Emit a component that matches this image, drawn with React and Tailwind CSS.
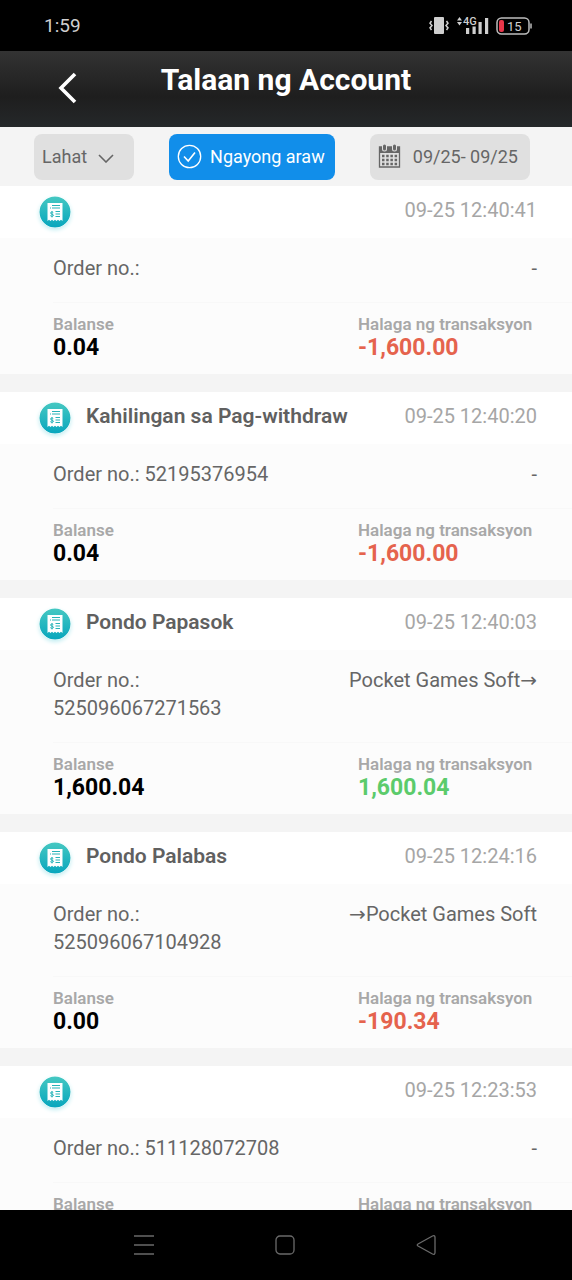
import React, { useState } from 'react';

const records = [
    { id: 1, title: '', time: '09-25 12:40:41', orderNo: '', remark: '-', balance: '0.04', amount: '-1,600.00' },
    { id: 2, title: 'Kahilingan sa Pag-withdraw', time: '09-25 12:40:20', orderNo: '52195376954', remark: '-', balance: '0.04', amount: '-1,600.00' },
    { id: 3, title: 'Pondo Papasok', time: '09-25 12:40:03', orderNo: '525096067271563', remark: 'Pocket Games Soft', flow: 'in', balance: '1,600.04', amount: '1,600.04' },
    { id: 4, title: 'Pondo Palabas', time: '09-25 12:24:16', orderNo: '525096067104928', remark: 'Pocket Games Soft', flow: 'out', balance: '0.00', amount: '-190.34' },
    { id: 5, title: '', time: '09-25 12:23:53', orderNo: '511128072708', remark: '-', balance: '190.34', amount: '-200.00' },
];

const StatusBar = () => (
    <div className="flex h-[51px] shrink-0 items-center justify-between bg-black pl-11 pr-10 text-[#cfcfcf]">
        <span className="text-[19px] leading-6">1:59</span>
        <svg width="104" height="22" viewBox="0 0 104 22" aria-hidden="true">
            <rect x="6" y="2" width="10" height="17" rx="1" fill="#cfcfcf" />
            <path d="M3.5 6l-1.500 2.300 2 2.300-2 2.300L3.500 15M18.500 6l1.500 2.300-2 2.300 2 2.300-1.500 2.100" fill="none" stroke="#cfcfcf" strokeWidth="1.500" />
            <path d="M29 5.500l2.500-3.500 2.500 3.500zM29 7l2.500 3.500 2.500-3.500z" fill="#cfcfcf" />
            <text x="35" y="10" fontSize="11" fontWeight="500" fill="#cfcfcf">4G</text>
            <path d="M38 13h3.200v6H38zM44.500 11.500h3.200V19h-3.200zM50.500 7h3.200v12h-3.200zM57 3h3.200v16H57z" fill="#cfcfcf" />
            <rect x="69" y="3" width="32" height="16" rx="4.500" fill="none" stroke="#bdbdbd" strokeWidth="1.500" />
            <rect x="71" y="5" width="5" height="12" rx="2" fill="#e8364a" />
            <path d="M103 8.500v5" stroke="#bdbdbd" strokeWidth="1.500" />
            <text x="79" y="16" fontSize="13" fill="#cfcfcf">15</text>
        </svg>
    </div>
);

const Header = () => (
    <header className="grid h-[76px] shrink-0 grid-cols-[1fr_auto_1fr] bg-linear-to-b from-[#333333] via-[#1e1e1e] via-60% to-[#25282a] text-white">
        <button type="button" aria-label="Bumalik" className="justify-self-start pb-0.5 pl-14">
            <svg width="22" height="32" viewBox="0 0 22 32" fill="none" stroke="currentColor" strokeWidth="3.600" aria-hidden="true">
                <path d="M19 2L5 16l14 14" />
            </svg>
        </button>
        <h1 className="pt-[11px] text-[30px] font-bold leading-9">Talaan ng Account</h1>
    </header>
);

const Filters = () => {
    const [type, setType] = useState('all');

    return (
        <div className="flex shrink-0 items-start justify-between bg-[#f4f4f4] pb-[6px] pl-[34px] pr-[42px] pt-[7px] text-[18px] text-[#666666]">
            <div className="relative">
                <select aria-label="Uri" value={type} onChange={e => setType(e.target.value)} className="h-[46px] w-[100px] appearance-none rounded-lg bg-[#e0e0e0] pb-0.5 pl-2">
                    <option value="all">Lahat</option>
                    <option value="in">Pondo Papasok</option>
                    <option value="out">Pondo Palabas</option>
                </select>
                <svg className="pointer-events-none absolute right-5 top-5" width="16" height="9" viewBox="0 0 16 9" fill="none" stroke="currentColor" strokeWidth="1.600" aria-hidden="true">
                    <path d="M1 1l7 7 7-7" />
                </svg>
            </div>
            <button type="button" className="flex h-[46px] items-center gap-2 rounded-lg bg-[#118eea] pb-0.5 pl-2 pr-[10px] text-white">
                <svg width="25" height="25" viewBox="0 0 25 25" fill="none" stroke="currentColor" strokeWidth="1.300" aria-hidden="true">
                    <circle cx="12.500" cy="12.500" r="11.200" />
                    <path d="M7 12.500l4.200 4.500L18 8.500" strokeWidth="1.600" />
                </svg>
                Ngayong araw
            </button>
            <button type="button" className="flex h-[46px] items-center gap-3 rounded-lg bg-[#e0e0e0] pb-0.5 pl-2 pr-3">
                <CalendarIcon />
                09/25- 09/25
            </button>
        </div>
    );
};

const CalendarIcon = () => (
    <svg width="23" height="24" viewBox="0 0 23 24" aria-hidden="true">
        <path d="M1.500 3h20v20h-20z" fill="none" stroke="#666666" strokeWidth="1.300" />
        <path d="M1 3h21v6H1z" fill="#666666" />
        <path d="M6.500 1v4M16.500 1v4" stroke="#e0e0e0" strokeWidth="5" strokeLinecap="round" />
        <path d="M6.500 2v3M16.500 2v3" stroke="#666666" strokeWidth="3" strokeLinecap="round" />
        <path d="M4 12h16M4 16h16M4 20h16" stroke="#666666" strokeWidth="2.500" strokeDasharray="2.500 1.700" />
    </svg>
);

const ReceiptIcon = () => (
    <svg width="32" height="32" viewBox="0 0 32 32" className="rounded-full shadow-[0_2px_4px_#c4eef2]" aria-hidden="true">
        <defs>
            <linearGradient id="receipt-bg" x1="0" y1="0" x2="0" y2="1">
                <stop offset="0" stopColor="#45c8c2" />
                <stop offset="1" stopColor="#08a6bd" />
            </linearGradient>
        </defs>
        <circle cx="16" cy="16" r="15.500" fill="url(#receipt-bg)" />
        <path d="M8.500 7h15v18l-1.500-1.200-1.500 1.200-1.500-1.200-1.500 1.200-1.500-1.200-1.500 1.200-1.500-1.200-1.500 1.200-1.500-1.200-1.500 1.200z" fill="#ffffff" />
        <path d="M13 9.500h8M11 12h1M13 12h8M16.500 15.500H21M16.500 18H21M16.500 20.500H21" stroke="#27b3b8" strokeWidth="1.200" />
        <path d="M14.300 16.600c-.6-.8-2.800-.8-2.800.4 0 1.400 3 .9 3 2.300 0 1.300-2.600 1.300-3.200.3M13 15v6.400" fill="none" stroke="#27b3b8" strokeWidth="1" />
    </svg>
);

const Arrow = () => <span className="font-['DejaVu_Sans',sans-serif]">→</span>;

const RecordCard = ({ record }) => {
    const negative = record.amount.startsWith('-');

    return (
        <li className="bg-[#fcfcfc]">
            <div className="flex h-[52px] items-center gap-[15px] bg-white pl-[39px] pr-[35px]">
                <ReceiptIcon />
                <h2 className="flex-1 pb-1 text-[21px] font-semibold leading-7 text-[#606060]">{record.title}</h2>
                <time className="pb-1 text-[20px] leading-7 text-[#a6a6a6]">{record.time}</time>
            </div>
            <div className="flex justify-between pb-5 pl-[53px] pr-[35px] pt-4 text-[20px] leading-7 text-[#666666]">
                <p className="w-1/2">Order no.: {record.orderNo}</p>
                <p>
                    {record.flow === 'out' && <Arrow />}
                    {record.remark}
                    {record.flow === 'in' && <Arrow />}
                </p>
            </div>
            <dl className="ml-[53px] flex justify-between border-t border-[#f8f8f8] pb-3 pr-[35px] pt-[11px]">
                <div>
                    <dt className="text-[17px] font-semibold leading-5 text-[#a8a8a8]">Balanse</dt>
                    <dd className="text-[23px] font-bold leading-7 text-black">{record.balance}</dd>
                </div>
                <div className="w-[179px]">
                    <dt className="text-[17px] font-semibold leading-5 text-[#a8a8a8]">Halaga ng transaksyon</dt>
                    <dd className={negative ? 'text-[23px] font-bold leading-7 text-[#e5634d]' : 'text-[23px] font-bold leading-7 text-[#5bcb6b]'}>{record.amount}</dd>
                </div>
            </dl>
        </li>
    );
};

const NavBar = () => (
    <nav className="flex h-[70px] shrink-0 items-center justify-between bg-black pl-[134px] pr-[136px] text-[#6a6a6a]">
        <button type="button" aria-label="Menu">
            <svg width="20" height="20" viewBox="0 0 20 20" fill="none" stroke="currentColor" strokeWidth="1.300" aria-hidden="true">
                <path d="M0 1h20M0 10h20M0 19h20" />
            </svg>
        </button>
        <button type="button" aria-label="Home">
            <svg width="20" height="20" viewBox="0 0 20 20" fill="none" stroke="currentColor" strokeWidth="1.300" aria-hidden="true">
                <rect x="1" y="1" width="18" height="18" rx="4" />
            </svg>
        </button>
        <button type="button" aria-label="Back">
            <svg width="20" height="20" viewBox="0 0 20 20" fill="none" stroke="currentColor" strokeWidth="1.300" strokeLinejoin="round" aria-hidden="true">
                <path d="M2 9L16.500 1Q19 0 19 2.500v15Q19 20 16.500 19L2 11Q.500 10 2 9z" />
            </svg>
        </button>
    </nav>
);

const App = () => (
    <div className="flex h-screen flex-col overflow-hidden bg-[#f4f4f4] font-[Roboto,'Liberation_Sans',sans-serif]">
        <StatusBar />
        <Header />
        <Filters />
        <main className="min-h-0 flex-1 overflow-y-auto [scrollbar-width:none]">
            <ul className="flex flex-col gap-[18px]">
                {records.map(record => (
                    <RecordCard key={record.id} record={record} />
                ))}
            </ul>
        </main>
        <NavBar />
    </div>
);

export default App;
